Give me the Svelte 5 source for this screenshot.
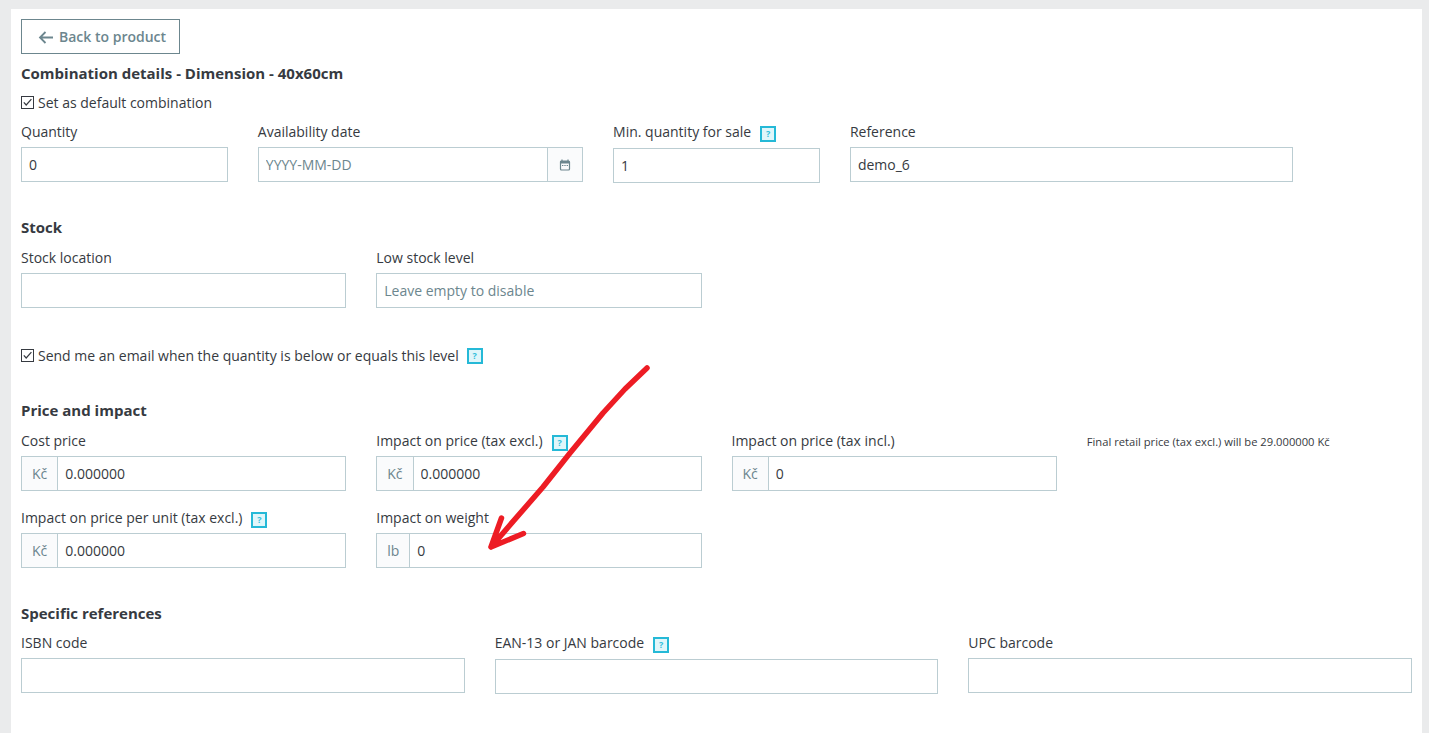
<script>
	const priceRow = [
		{ label: 'Cost price', unit: 'Kč', value: '0.000000' },
		{ label: 'Impact on price (tax excl.)', unit: 'Kč', value: '0.000000', help: true },
		{ label: 'Impact on price (tax incl.)', unit: 'Kč', value: '0' }
	];
	const perUnitRow = [
		{ label: 'Impact on price per unit (tax excl.)', unit: 'Kč', value: '0.000000', help: true },
		{ label: 'Impact on weight', unit: 'lb', value: '0' }
	];
	const references = [
		{ label: 'ISBN code' },
		{ label: 'EAN-13 or JAN barcode', help: true, tall: true },
		{ label: 'UPC barcode' }
	];
</script>

{#snippet help()}
	<span class="help">?</span>
{/snippet}

{#snippet check(text, showHelp)}
	<label class="check">
		<svg class="check__box" viewBox="0 0 13 13" width="13" height="13" aria-hidden="true">
			<rect x="0.5" y="0.5" width="12" height="12" fill="#fff" stroke="#363a41"></rect>
			<path d="M2.8 6.3 5.2 9 10.4 3.2" fill="none" stroke="#363a41" stroke-width="1.2"></path>
		</svg>
		<span>{text}</span>
		{#if showHelp}{@render help()}{/if}
	</label>
{/snippet}

{#snippet priceField(field)}
	<div class="col col-3">
		<div class="label">{field.label}{#if field.help}{@render help()}{/if}</div>
		<div class="group">
			<span class="addon">{field.unit}</span>
			<input class="input input--joined" value={field.value} />
		</div>
	</div>
{/snippet}

<main class="card">
	<button class="back" type="button">
		<svg viewBox="0 0 15 14" width="15" height="14" aria-hidden="true">
			<path d="M15 7.5H2.5M7.5 2 2 7.5 7.5 13" fill="none" stroke="#6c868e" stroke-width="1.8"></path>
		</svg>
		Back to product
	</button>

	<h2 class="title">Combination details - Dimension - 40x60cm</h2>
	{@render check('Set as default combination', false)}

	<div class="row row--top">
		<div class="col col-2">
			<div class="label">Quantity</div>
			<input class="input" value="0" />
		</div>
		<div class="col col-3">
			<div class="label">Availability date</div>
			<div class="group">
				<input class="input input--date" placeholder="YYYY-MM-DD" />
				<span class="addon addon--end">
					<svg viewBox="0 0 12 12" width="12" height="12" aria-hidden="true">
						<path d="M3 .5v2M9 .5v2" stroke="#6c868e" stroke-width="1.2"></path>
						<rect x="1.5" y="2" width="9" height="9" rx="1" fill="none" stroke="#6c868e" stroke-width="1.2"></rect>
						<rect x="1.5" y="2" width="9" height="2.5" fill="#6c868e"></rect>
						<path d="M3 6.5h1.4M5.3 6.5h1.4M7.6 6.5H9" stroke="#6c868e" stroke-width="1.2"></path>
					</svg>
				</span>
			</div>
		</div>
		<div class="col col-2">
			<div class="label label--tall">Min. quantity for sale{@render help()}</div>
			<input class="input" value="1" />
		</div>
		<div class="col col-4">
			<div class="label">Reference</div>
			<input class="input input--ref" value="demo_6" />
		</div>
	</div>

	<h3 class="heading heading--stock">Stock</h3>
	<div class="row">
		<div class="col col-3">
			<div class="label">Stock location</div>
			<input class="input" />
		</div>
		<div class="col col-3">
			<div class="label">Low stock level</div>
			<input class="input" placeholder="Leave empty to disable" />
		</div>
	</div>

	<div class="notify">
		{@render check('Send me an email when the quantity is below or equals this level', true)}
	</div>

	<h3 class="heading heading--price">Price and impact</h3>
	<div class="row">
		{#each priceRow as field}
			{@render priceField(field)}
		{/each}
		<div class="col col-3 final">Final retail price (tax excl.) will be 29.000000 Kč</div>
	</div>
	<div class="row row--next">
		{#each perUnitRow as field}
			{@render priceField(field)}
		{/each}
	</div>

	<h3 class="heading heading--refs">Specific references</h3>
	<div class="row">
		{#each references as field}
			<div class="col col-4">
				<div class="label" class:label--tall={field.tall}>{field.label}{#if field.help}{@render help()}{/if}</div>
				<input class="input" />
			</div>
		{/each}
	</div>

	<svg class="arrow" viewBox="0 0 1429 733" width="1429" height="733" aria-hidden="true">
		<path
			d="M647 368 625 389 603 413 570 453 543 487 510 525 491 547M501.5 518 491 547 523.500 533.500"
			fill="none"
			stroke="#ed1c24"
			stroke-width="5.5"
			stroke-linecap="round"
			stroke-linejoin="round"
		></path>
	</svg>
</main>

<style>
	:global(body) {
		background: #eaebec;
		font-family: 'Open Sans', sans-serif;
		font-size: 14px;
		color: #363a41;
		overflow: hidden;
	}

	.card {
		box-sizing: border-box;
		width: 1411px;
		height: 724px;
		margin: 9px 0 0 11px;
		padding: 10px;
		background: #fff;
	}

	.back {
		display: flex;
		align-items: center;
		gap: 6px;
		box-sizing: border-box;
		width: 159px;
		height: 35px;
		padding: 0 0 0 16px;
		border: 1px solid #6c868e;
		border-radius: 0;
		background: #fff;
		color: #6c868e;
		font: 600 14px/1 'Open Sans', sans-serif;
	}

	.title {
		margin: 9px 0 0;
		font-size: 15px;
		font-weight: 700;
		line-height: 21px;
	}

	.check {
		display: flex;
		align-items: center;
		gap: 4px;
		margin-top: 8px;
		line-height: 21px;
	}

	.check__box {
		flex: none;
	}

	.check .help {
		margin-left: 4px;
	}

	.row {
		display: grid;
		grid-template-columns: repeat(12, 1fr);
		gap: 30px;
		width: 1391px;
	}

	.row--top {
		margin-top: 8px;
	}

	.row--next {
		margin-top: 16px;
	}

	.col-2 {
		grid-column: span 2;
	}

	.col-3 {
		grid-column: span 3;
	}

	.col-4 {
		grid-column: span 4;
	}

	.label {
		height: 21px;
		margin-bottom: 5px;
		line-height: 21px;
		white-space: nowrap;
	}

	.label--tall {
		margin-bottom: 6px;
	}

	.input {
		display: block;
		box-sizing: border-box;
		width: 100%;
		height: 35px;
		padding: 0 7px;
		border: 1px solid #bbcdd2;
		border-radius: 0;
		background: #fff;
		color: #363a41;
		font: 14px 'Open Sans', sans-serif;
		outline: none;
	}

	.input::placeholder {
		color: #6c868e;
		opacity: 1;
	}

	.input--ref {
		width: calc(100% - 1px);
	}

	.group {
		display: flex;
	}

	.addon {
		display: flex;
		flex: none;
		align-items: center;
		justify-content: center;
		box-sizing: border-box;
		height: 35px;
		padding: 0 10px;
		border: 1px solid #bbcdd2;
		border-right: 0;
		background: #fafbfc;
		color: #6c868e;
	}

	.addon--end {
		width: 36px;
		padding: 0;
		border-right: 1px solid #bbcdd2;
		border-left: 1px solid #bbcdd2;
	}

	.input--date {
		border-right: 0;
	}

	.help {
		display: inline-flex;
		align-items: center;
		justify-content: center;
		box-sizing: border-box;
		width: 16px;
		height: 16px;
		margin-left: 9px;
		border: 2px solid #25b9d7;
		background: #e0f6fa;
		color: #35bfdc;
		font-size: 9px;
		font-weight: 700;
		line-height: 1;
		vertical-align: 0;
	}

	.heading {
		margin: 0 0 9px;
		font-size: 15px;
		font-weight: 700;
		line-height: 21px;
	}

	.heading--stock {
		margin-top: 34px;
	}

	.heading--price {
		margin-top: 34px;
	}

	.heading--refs {
		margin-top: 35px;
		margin-bottom: 8px;
	}

	.notify {
		margin-top: 37px;
	}

	.final {
		padding-top: 4px;
		font-size: 11.2px;
		line-height: 16px;
		white-space: nowrap;
	}

	.arrow {
		position: absolute;
		top: 0;
		left: 0;
		pointer-events: none;
	}
</style>
